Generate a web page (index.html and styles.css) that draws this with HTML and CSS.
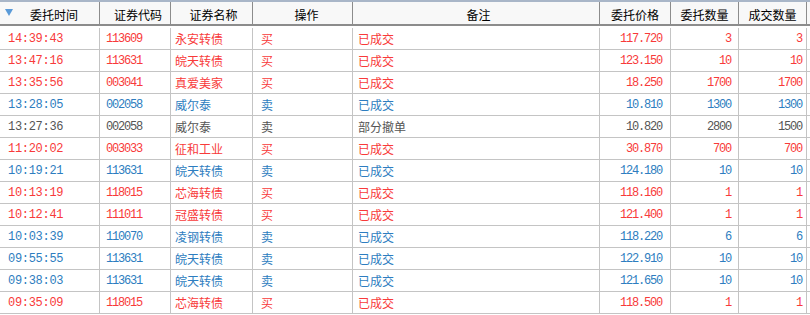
FILE: index.html
```html
<!DOCTYPE html>
<html lang="zh">
<head>
<meta charset="utf-8">
<link rel="stylesheet" href="styles.css">
</head>
<body>
<div class="grid">
  <div class="row head">
    <div class="c c1 h first"><span class="tri"></span><span class="ht">委托时间</span></div>
    <div class="c c2 h">证券代码</div>
    <div class="c c3 h">证券名称</div>
    <div class="c c4 h">操作</div>
    <div class="c c5 h">备注</div>
    <div class="c c6 h">委托价格</div>
    <div class="c c7 h">委托数量</div>
    <div class="c c8 h">成交数量</div>
  </div>
  <div class="row red"><div class="c c1 n">14:39:43</div><div class="c c2 n">113609</div><div class="c c3 z">永安转债</div><div class="c c4 z">买</div><div class="c c5 z">已成交</div><div class="c c6 n r">117.720</div><div class="c c7 n r">3</div><div class="c c8 n r">3</div></div>
  <div class="row red"><div class="c c1 n">13:47:16</div><div class="c c2 n">113631</div><div class="c c3 z">皖天转债</div><div class="c c4 z">买</div><div class="c c5 z">已成交</div><div class="c c6 n r">123.150</div><div class="c c7 n r">10</div><div class="c c8 n r">10</div></div>
  <div class="row red"><div class="c c1 n">13:35:56</div><div class="c c2 n">003041</div><div class="c c3 z">真爱美家</div><div class="c c4 z">买</div><div class="c c5 z">已成交</div><div class="c c6 n r">18.250</div><div class="c c7 n r">1700</div><div class="c c8 n r">1700</div></div>
  <div class="row blue"><div class="c c1 n">13:28:05</div><div class="c c2 n">002058</div><div class="c c3 z">威尔泰</div><div class="c c4 z">卖</div><div class="c c5 z">已成交</div><div class="c c6 n r">10.810</div><div class="c c7 n r">1300</div><div class="c c8 n r">1300</div></div>
  <div class="row gray"><div class="c c1 n">13:27:36</div><div class="c c2 n">002058</div><div class="c c3 z">威尔泰</div><div class="c c4 z">卖</div><div class="c c5 z">部分撤单</div><div class="c c6 n r">10.820</div><div class="c c7 n r">2800</div><div class="c c8 n r">1500</div></div>
  <div class="row red"><div class="c c1 n">11:20:02</div><div class="c c2 n">003033</div><div class="c c3 z">征和工业</div><div class="c c4 z">买</div><div class="c c5 z">已成交</div><div class="c c6 n r">30.870</div><div class="c c7 n r">700</div><div class="c c8 n r">700</div></div>
  <div class="row blue"><div class="c c1 n">10:19:21</div><div class="c c2 n">113631</div><div class="c c3 z">皖天转债</div><div class="c c4 z">卖</div><div class="c c5 z">已成交</div><div class="c c6 n r">124.180</div><div class="c c7 n r">10</div><div class="c c8 n r">10</div></div>
  <div class="row red"><div class="c c1 n">10:13:19</div><div class="c c2 n">118015</div><div class="c c3 z">芯海转债</div><div class="c c4 z">买</div><div class="c c5 z">已成交</div><div class="c c6 n r">118.160</div><div class="c c7 n r">1</div><div class="c c8 n r">1</div></div>
  <div class="row red"><div class="c c1 n">10:12:41</div><div class="c c2 n">111011</div><div class="c c3 z">冠盛转债</div><div class="c c4 z">买</div><div class="c c5 z">已成交</div><div class="c c6 n r">121.400</div><div class="c c7 n r">1</div><div class="c c8 n r">1</div></div>
  <div class="row blue"><div class="c c1 n">10:03:39</div><div class="c c2 n">110070</div><div class="c c3 z">凌钢转债</div><div class="c c4 z">卖</div><div class="c c5 z">已成交</div><div class="c c6 n r">118.220</div><div class="c c7 n r">6</div><div class="c c8 n r">6</div></div>
  <div class="row blue"><div class="c c1 n">09:55:55</div><div class="c c2 n">113631</div><div class="c c3 z">皖天转债</div><div class="c c4 z">卖</div><div class="c c5 z">已成交</div><div class="c c6 n r">122.910</div><div class="c c7 n r">10</div><div class="c c8 n r">10</div></div>
  <div class="row blue"><div class="c c1 n">09:38:03</div><div class="c c2 n">113631</div><div class="c c3 z">皖天转债</div><div class="c c4 z">卖</div><div class="c c5 z">已成交</div><div class="c c6 n r">121.650</div><div class="c c7 n r">10</div><div class="c c8 n r">10</div></div>
  <div class="row red"><div class="c c1 n">09:35:09</div><div class="c c2 n">118015</div><div class="c c3 z">芯海转债</div><div class="c c4 z">买</div><div class="c c5 z">已成交</div><div class="c c6 n r">118.500</div><div class="c c7 n r">1</div><div class="c c8 n r">1</div></div>
</div>
</body>
</html>
```

FILE: styles.css
```css
html, body {
  margin: 0;
  padding: 0;
  background: #ffffff;
}
.grid {
  width: 810px;
  display: flex;
  flex-direction: column;
}
.row {
  display: grid;
  grid-template-columns: 100px 71px 82px 100px 247px 71px 68px 68px;
  height: 22px;
  border-bottom: 1px solid #c4c4c4;
  box-sizing: border-box;
}
.row.head {
  height: 28px;
  border-top: 2px solid #a9b6c8;
  border-bottom: none;
  background: linear-gradient(#f8f8f8 0, #f8f8f8 22px, #8c8c8c 22px, #8c8c8c 24px, #ffffff 24px);
}
.c {
  box-sizing: border-box;
  border-right: 1px solid #c4c4c4;
  display: flex;
  align-items: center;
  white-space: nowrap;
  overflow: hidden;
}
.h {
  border-right: 1px solid #8c8c8c;
  height: 24px;
  justify-content: center;
  font-family: "Noto Sans CJK SC", "Noto Sans", sans-serif;
  font-size: 12px;
  color: #000;
}
.h.first {
  justify-content: flex-start;
  padding-left: 5px;
}
.ht {
  margin-left: 17px;
}
.tri {
  width: 0;
  height: 0;
  border-left: 4px solid transparent;
  border-right: 4px solid transparent;
  border-top: 7px solid #5a9ad8;
  margin-top: -4px;
}
.n {
  font-family: "Liberation Mono", "DejaVu Sans Mono", monospace;
  font-size: 12px;
  letter-spacing: -1.2px;
}
.c1.n {
  letter-spacing: -0.3px;
  padding-left: 8px;
}
.c2 { padding-left: 6px; }
.c3 { padding-left: 4px; }
.c4 { padding-left: 8px; }
.c5 { padding-left: 5px; }
.z {
  font-family: "Noto Sans CJK SC", "Noto Sans", sans-serif;
  font-size: 12px;
}
.r {
  justify-content: flex-end;
}
.c6.r { padding-right: 8px; }
.c7.r { padding-right: 7px; }
.c8.r { padding-right: 4px; }
.red { color: #f83a3a; }
.blue { color: #2d7dc0; }
.gray { color: #555555; }
```
